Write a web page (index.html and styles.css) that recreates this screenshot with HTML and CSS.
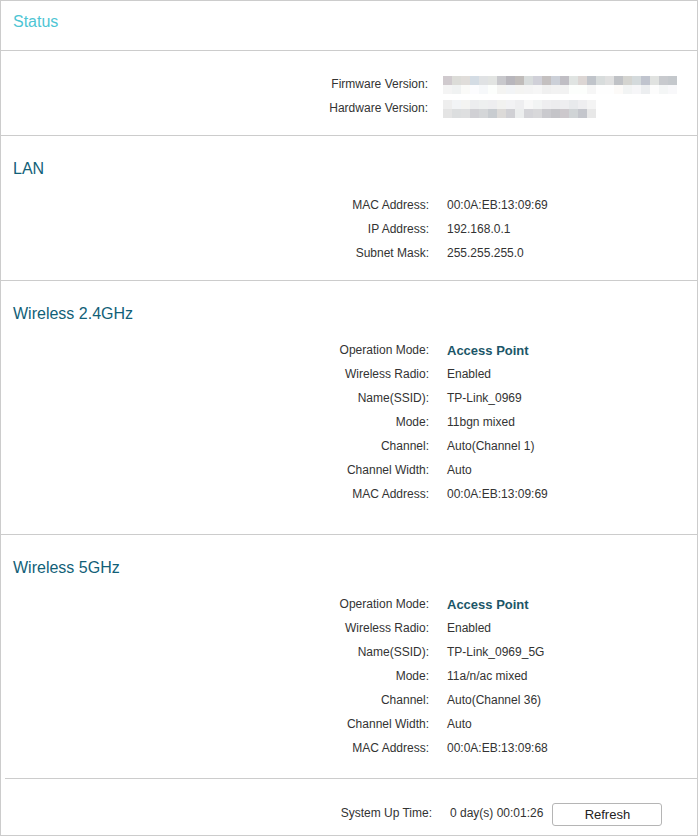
FILE: index.html
```html
<!DOCTYPE html>
<html lang="en">
<head>
<meta charset="UTF-8">
<meta name="viewport" content="width=device-width, initial-scale=1.0">
<title>Status</title>
<link rel="stylesheet" href="styles.css">
</head>
<body>

<div class="panel">
  <div class="panel-head">Status</div>

  <div class="section section-version">
    <div class="row">
      <span class="label">Firmware Version:</span>
      <span class="blur blur-fw"></span>
    </div>
    <div class="row">
      <span class="label">Hardware Version:</span>
      <span class="blur blur-hw"></span>
    </div>
  </div>

  <div class="section section-lan">
    <h2>LAN</h2>
    <div class="row"><span class="label">MAC Address:</span><span class="value">00:0A:EB:13:09:69</span></div>
    <div class="row"><span class="label">IP Address:</span><span class="value">192.168.0.1</span></div>
    <div class="row"><span class="label">Subnet Mask:</span><span class="value">255.255.255.0</span></div>
  </div>

  <div class="section section-w24">
    <h2>Wireless 2.4GHz</h2>
    <div class="row"><span class="label">Operation Mode:</span><span class="value strong">Access Point</span></div>
    <div class="row"><span class="label">Wireless Radio:</span><span class="value">Enabled</span></div>
    <div class="row"><span class="label">Name(SSID):</span><span class="value">TP-Link_0969</span></div>
    <div class="row"><span class="label">Mode:</span><span class="value">11bgn mixed</span></div>
    <div class="row"><span class="label">Channel:</span><span class="value">Auto(Channel 1)</span></div>
    <div class="row"><span class="label">Channel Width:</span><span class="value">Auto</span></div>
    <div class="row"><span class="label">MAC Address:</span><span class="value">00:0A:EB:13:09:69</span></div>
  </div>

  <div class="section section-w5">
    <h2>Wireless 5GHz</h2>
    <div class="row"><span class="label">Operation Mode:</span><span class="value strong">Access Point</span></div>
    <div class="row"><span class="label">Wireless Radio:</span><span class="value">Enabled</span></div>
    <div class="row"><span class="label">Name(SSID):</span><span class="value">TP-Link_0969_5G</span></div>
    <div class="row"><span class="label">Mode:</span><span class="value">11a/n/ac mixed</span></div>
    <div class="row"><span class="label">Channel:</span><span class="value">Auto(Channel 36)</span></div>
    <div class="row"><span class="label">Channel Width:</span><span class="value">Auto</span></div>
    <div class="row"><span class="label">MAC Address:</span><span class="value">00:0A:EB:13:09:68</span></div>
  </div>

  <div class="footer">
    <span class="label">System Up Time:</span>
    <span class="value">0 day(s) 00:01:26</span>
    <button type="button">Refresh</button>
  </div>
</div>

</body>
</html>
```
FILE: styles.css
```css
body {
  font-family: "Liberation Sans", Arial, sans-serif;
  margin: 0;
  padding: 0;
  background: #fff;
  color: #333;
}
.panel {
  width: 696px;
  border: 1px solid #ccc;
}
.panel-head {
  height: 49px;
  padding-left: 12px;
  line-height: 42px;
  font-size: 16px;
  color: #4ec5d4;
  border-bottom: 1px solid #ccc;
}
.section {
  border-bottom: 1px solid #ccc;
}
.section h2 {
  margin: 0 0 14px 12px;
  height: 20px;
  line-height: 20px;
  font-size: 16px;
  font-weight: normal;
  color: #125f78;
}
.section-version {
  padding: 21px 0 15px;
}
.section-lan {
  padding: 23px 0 15px;
}
.section-w24 {
  padding: 23px 0 28px;
}
.section-w5 {
  padding: 23px 0 18px;
  border-bottom: none;
}
.row {
  display: flex;
  align-items: center;
  height: 24px;
  font-size: 12px;
}
.label {
  width: 428px;
  text-align: right;
  color: #333;
}
.value {
  margin-left: 18px;
  color: #333;
}
.value.strong {
  font-size: 13px;
  font-weight: bold;
  color: #1b5668;
}
.section-version .label {
  width: 427px;
}
.blur {
  display: block;
  height: 18px;
  margin-left: 15px;
}
.blur-fw {
  width: 234px;
  margin-top: 2px;
  background:
    linear-gradient(to right,
      #d0cace 0 9px, #dcdcd8 9px 18px, #e0ddda 18px 27px, #d4dce4 27px 36px,
      #e0e2e4 36px 45px, #e2e4e2 45px 54px, #c8c8cc 54px 63px, #b8b6bc 63px 72px,
      #c0bcba 72px 81px, #d8dcdc 81px 90px, #d0d0d8 90px 99px, #c4c0c0 99px 108px,
      #ccd0d8 108px 117px, #c0bec4 117px 126px, #e0e4e2 126px 135px, #dcd6d4 135px 144px,
      #c0c4ca 144px 153px, #d8dcdc 153px 162px, #e0e0e0 162px 171px, #c0c2c6 171px 180px,
      #d4d4d0 180px 189px, #d4dadc 189px 198px, #c0c4ce 198px 207px, #e0e2e0 207px 216px,
      #c8cace 216px 225px, #c4c8cc 225px 234px) top / 100% 9px no-repeat,
    linear-gradient(to right,
      #f4f4f4 0 9px, #f0f2f2 9px 18px, #fafaf8 18px 27px, #fcfcfe 27px 36px,
      #f6f8fa 36px 45px, #fcfefc 45px 54px, #f4f4f2 54px 63px, #f2f4f6 63px 72px,
      #f4f4f2 72px 81px, #f4f4f4 81px 90px, #f6f6f6 90px 99px, #f0f0f0 99px 108px,
      #f2f2f2 108px 126px, #fcfefc 126px 144px, #f6f6f6 144px 153px, #fefefe 153px 171px,
      #fcfaf8 171px 180px, #f2f4f4 180px 189px, #f6f6f8 189px 198px, #eceef0 198px 207px,
      #fcfcfc 207px 216px, #f4f6f6 216px 225px, #f8f8fa 225px 234px) bottom / 100% 9px no-repeat;
}
.blur-hw {
  width: 153px;
  margin-top: 2px;
  background:
    linear-gradient(to right,
      #eeeeee 0 9px, #f2f4f6 9px 18px, #f4f4f2 18px 27px, #ecedef 27px 36px,
      #eef0f0 36px 45px, #eeeef0 45px 54px, #f2f2f0 54px 63px, #f2f2f4 63px 72px,
      #eeeef0 72px 81px, #f8f8f8 81px 90px, #f2f4f4 90px 99px, #eeeef0 99px 108px,
      #ececee 108px 117px, #eeeef0 117px 126px, #e8eaec 126px 135px, #eeeef0 135px 144px,
      #f4f4f4 144px 153px) top / 100% 9px no-repeat,
    linear-gradient(to right,
      #e4e4e4 0 9px, #dcdedf 9px 18px, #dedfe0 18px 27px, #d0d0d4 27px 36px,
      #d4d6d8 36px 45px, #c8ccd0 45px 54px, #dcdad8 54px 63px, #d0d0d4 63px 72px,
      #eceeee 72px 81px, #d4d4d8 81px 90px, #d8d8da 90px 99px, #cacace 99px 108px,
      #c4c4c8 108px 117px, #ccc8cc 117px 126px, #d0d4d6 126px 135px, #c4c6cc 135px 144px,
      #e8e8e8 144px 153px) bottom / 100% 9px no-repeat;
}
.footer {
  display: flex;
  align-items: center;
  margin-left: 4px;
  height: 57px;
  padding-top: 12px;
  box-sizing: border-box;
  border-top: 1px solid #ccc;
  font-size: 12px;
}
.footer .label {
  width: 427px;
}
.footer .value {
  margin-left: 18px;
}
.footer button {
  margin-left: 9px;
  margin-top: 3px;
  width: 110px;
  height: 23px;
  padding: 0;
  font-family: inherit;
  font-size: 13px;
  color: #222;
  background: #fff;
  border: 1px solid #b5b5b5;
  border-radius: 3px;
  cursor: pointer;
}
```
